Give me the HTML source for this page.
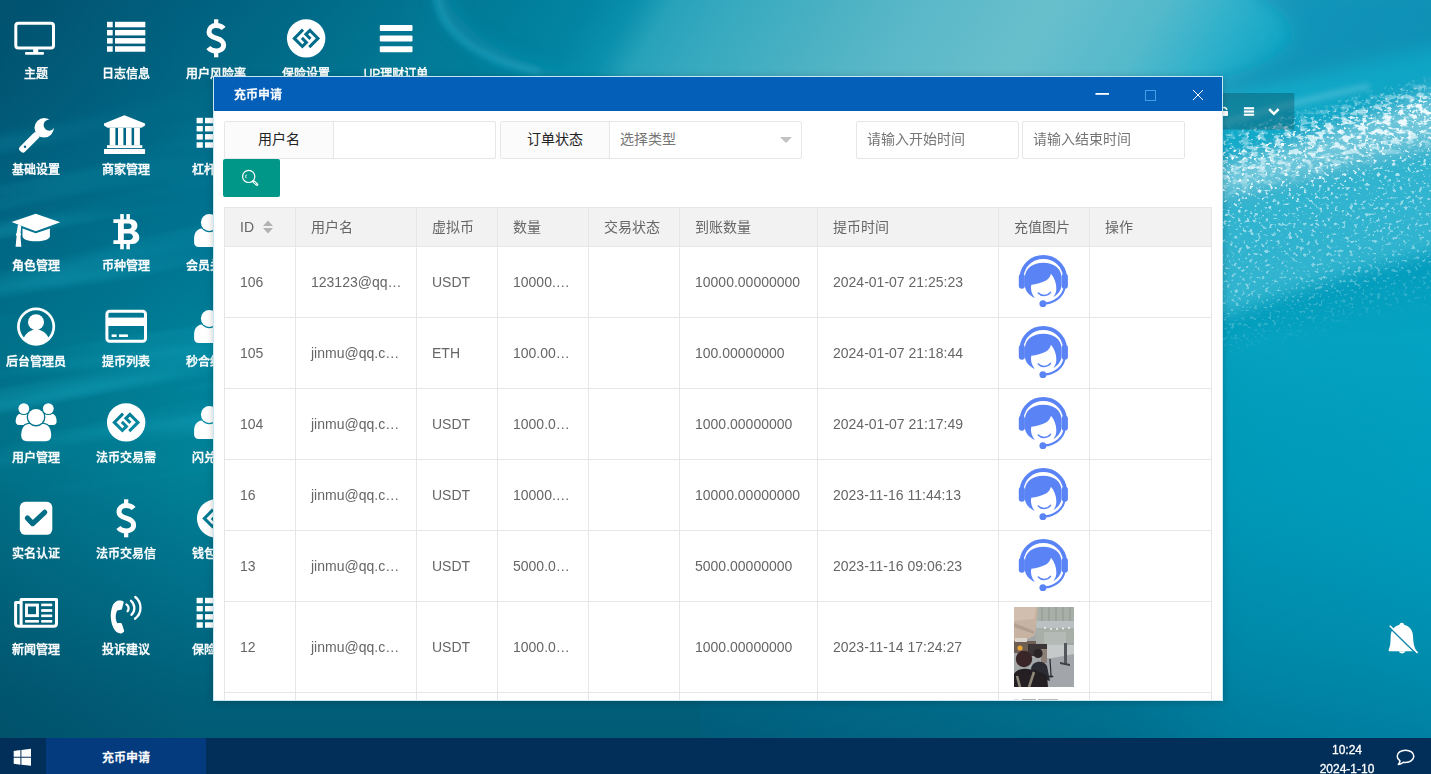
<!DOCTYPE html><html lang="zh-CN"><head><meta charset="utf-8"><title>充币申请</title><style>
*{box-sizing:border-box;margin:0;padding:0}
html,body{width:1431px;height:774px;overflow:hidden}
body{position:relative;font-family:"Liberation Sans","Noto Sans CJK SC",sans-serif;font-size:14px;color:#666;background:#067a98}
#bg{position:absolute;left:0;top:0;width:1431px;height:774px}
#desk{position:absolute;left:0;top:0;width:1431px;height:738px;overflow:hidden}
.lbl{position:absolute;width:90px;text-align:center;color:#fff;font-size:12px;line-height:16px;font-weight:500;-webkit-text-stroke:0.35px #fff;white-space:nowrap;font-family:"Liberation Sans","Noto Sans CJK SC",sans-serif}
#icons{position:absolute;left:0;top:0}
#win{position:absolute;left:213px;top:76px;width:1010px;height:625px;background:#fff;border:1px solid #c4e9f3;overflow:hidden;box-shadow:0 1px 7px rgba(0,0,0,.22)}
#ttl{position:absolute;left:0;top:0;width:1008px;height:34px;background:#045fb8;color:#fff}
#ttl .t{position:absolute;left:20px;top:9.5px;font-size:12px;line-height:17px;font-weight:500;-webkit-text-stroke:0.35px #fff}
#body{position:absolute;left:0;top:34px;width:1008px;height:589px;background:#fff;overflow:hidden}
.fi{position:absolute;top:10px;height:38px;border:1px solid #e6e6e6;border-radius:2px;background:#fff}
.fl{position:absolute;top:0;left:0;height:36px;line-height:35px;text-align:center;background:#fbfbfb;border-right:1px solid #e6e6e6;color:#222;font-size:14px}
.ph{position:absolute;top:0;line-height:35px;color:#757575;font-size:14px}
#sbtn{position:absolute;left:9px;top:48px;width:57px;height:38px;background:#009688;border-radius:2px}
table{position:absolute;left:10px;top:96px;width:987px;border-collapse:collapse;table-layout:fixed}
td,th{border:1px solid #e6e6e6;padding:0 15px;text-align:left;font-weight:400;font-size:14px;color:#666;white-space:nowrap;overflow:hidden}
th{background:#f2f2f2;height:39px;padding-bottom:2px}
td{height:71px}
#task{position:absolute;left:0;top:738px;width:1431px;height:36px;background:#022f5a}
#task .it{position:absolute;left:46px;top:0;width:160px;height:36px;background:#043b7e;color:#fff;font-size:12px;line-height:36px;text-align:center;font-weight:500;padding-top:2px;-webkit-text-stroke:0.35px #fff}
#clk{position:absolute;left:1297px;top:3px;width:100px;text-align:center;color:#fff;font-size:12px;line-height:18.5px;-webkit-text-stroke:0.3px #fff}
</style></head><body>
<svg id="bg" width="1431" height="774" viewBox="0 0 1431 774">
<defs>
<linearGradient id="g0" x1="0" y1="0" x2="0" y2="774" gradientUnits="userSpaceOnUse">
<stop offset="0" stop-color="#015c7a"/><stop offset="0.13" stop-color="#016280"/><stop offset="0.3" stop-color="#017492"/><stop offset="0.45" stop-color="#01819a"/><stop offset="0.6" stop-color="#018298"/><stop offset="0.75" stop-color="#01718a"/><stop offset="0.9" stop-color="#015f79"/><stop offset="1" stop-color="#015872"/>
</linearGradient>
<linearGradient id="gLd" x1="0" y1="0" x2="190" y2="0" gradientUnits="userSpaceOnUse"><stop offset="0" stop-color="#002038" stop-opacity="0.17"/><stop offset="1" stop-color="#002038" stop-opacity="0"/></linearGradient>
<linearGradient id="gBl" x1="150" y1="0" x2="760" y2="0" gradientUnits="userSpaceOnUse"><stop offset="0" stop-color="#007a98" stop-opacity="0"/><stop offset="0.5" stop-color="#007a98" stop-opacity="0.35"/><stop offset="1" stop-color="#007a98" stop-opacity="0"/></linearGradient>
<linearGradient id="gR" x1="700" y1="0" x2="1431" y2="0" gradientUnits="userSpaceOnUse">
<stop offset="0" stop-color="#009abb" stop-opacity="0"/><stop offset="0.55" stop-color="#009abb" stop-opacity="0.45"/><stop offset="0.75" stop-color="#009cbd" stop-opacity="0.85"/><stop offset="1" stop-color="#009ebf" stop-opacity="0.97"/>
</linearGradient>
<linearGradient id="gRv" x1="0" y1="250" x2="0" y2="774" gradientUnits="userSpaceOnUse">
<stop offset="0" stop-color="#12b0cc" stop-opacity="0"/><stop offset="0.17" stop-color="#0aaac8" stop-opacity="0.5"/><stop offset="0.45" stop-color="#009cbc" stop-opacity="0.2"/><stop offset="0.75" stop-color="#006e90" stop-opacity="0.3"/><stop offset="1" stop-color="#00587a" stop-opacity="0.5"/>
</linearGradient>
<linearGradient id="gT" x1="0" y1="0" x2="1431" y2="0" gradientUnits="userSpaceOnUse" gradientTransform="translate(22 0) skewX(-31)">
<stop offset="0" stop-color="#0a6280" stop-opacity="0"/><stop offset="0.14" stop-color="#006f8c" stop-opacity="0.35"/><stop offset="0.30" stop-color="#027a97"/><stop offset="0.335" stop-color="#017c99"/><stop offset="0.40" stop-color="#0285a2"/>
<stop offset="0.43" stop-color="#0a90ac"/><stop offset="0.455" stop-color="#27a2ba"/><stop offset="0.50" stop-color="#38aabf"/><stop offset="0.56" stop-color="#48b0c3"/><stop offset="0.62" stop-color="#58b7c7"/><stop offset="0.72" stop-color="#68bfcc"/><stop offset="0.80" stop-color="#54b9cb"/>
<stop offset="0.85" stop-color="#30b1cb"/><stop offset="0.90" stop-color="#10a6c5"/><stop offset="1" stop-color="#089cbd"/>
</linearGradient>
<linearGradient id="gTm" x1="0" y1="0" x2="0" y2="330" gradientUnits="userSpaceOnUse">
<stop offset="0" stop-color="#fff"/><stop offset="0.45" stop-color="#fff"/><stop offset="1" stop-color="#000"/>
</linearGradient>
<mask id="mT" maskUnits="userSpaceOnUse" x="0" y="0" width="1431" height="774"><rect width="1431" height="330" fill="url(#gTm)"/></mask>
<filter id="blur8" x="-20%" y="-20%" width="140%" height="140%"><feGaussianBlur stdDeviation="8"/></filter>
<filter id="blur3" x="-20%" y="-20%" width="140%" height="140%"><feGaussianBlur stdDeviation="3"/></filter>
<filter id="foam" x="0" y="0" width="100%" height="100%" color-interpolation-filters="sRGB">
<feTurbulence type="fractalNoise" baseFrequency="0.26 0.3" numOctaves="2" seed="7" result="n"/>
<feColorMatrix in="n" type="matrix" values="0 0 0 0 0.93  0 0 0 0 0.98  0 0 0 0 1  8 0 0 0 -4.7"/>
</filter>
<filter id="foam2" x="0" y="0" width="100%" height="100%" color-interpolation-filters="sRGB">
<feTurbulence type="fractalNoise" baseFrequency="0.12 0.2" numOctaves="3" seed="23" result="n"/>
<feColorMatrix in="n" type="matrix" values="0 0 0 0 0.95  0 0 0 0 0.99  0 0 0 0 1  6 0 0 0 -2.9"/>
</filter>
<filter id="rip" x="0" y="0" width="100%" height="100%" color-interpolation-filters="sRGB">
<feTurbulence type="fractalNoise" baseFrequency="0.003 0.035" numOctaves="2" seed="11" result="n"/>
<feColorMatrix in="n" type="matrix" values="0 0 0 0 0.1  0 0 0 0 0.68  0 0 0 0 0.78  2.6 0 0 0 -1.2"/>
</filter>
<linearGradient id="gFm" x1="0" y1="0" x2="0" y2="1">
<stop offset="0" stop-color="#000"/><stop offset="0.12" stop-color="#fff"/><stop offset="0.28" stop-color="#eee"/><stop offset="0.42" stop-color="#999"/><stop offset="0.75" stop-color="#666"/><stop offset="1" stop-color="#000"/>
</linearGradient>
<linearGradient id="gFm2" x1="0" y1="0" x2="0" y2="1">
<stop offset="0" stop-color="#000"/><stop offset="0.35" stop-color="#fff"/><stop offset="0.65" stop-color="#fff"/><stop offset="1" stop-color="#000"/>
</linearGradient>
<linearGradient id="gFx" x1="1200" y1="0" x2="1431" y2="0" gradientUnits="userSpaceOnUse"><stop offset="0" stop-color="#666"/><stop offset="0.5" stop-color="#ccc"/><stop offset="1" stop-color="#fff"/></linearGradient>
<mask id="mF" maskUnits="userSpaceOnUse" x="1100" y="-100" width="500" height="600"><g transform="rotate(-14 1326 140)"><rect x="1050" y="100" width="560" height="230" fill="url(#gFm)"/></g></mask>
<mask id="mF2" maskUnits="userSpaceOnUse" x="1100" y="-100" width="500" height="600"><g transform="rotate(-14 1326 140)"><rect x="1050" y="104" width="560" height="72" fill="url(#gFm2)"/></g></mask>
<mask id="mFx" maskUnits="userSpaceOnUse" x="1100" y="-100" width="500" height="600"><rect x="1100" y="-100" width="500" height="600" fill="url(#gFx)"/></mask>
<mask id="mRip" maskUnits="userSpaceOnUse" x="0" y="0" width="700" height="774"><linearGradient id="gRm" x1="0" y1="0" x2="0" y2="774" gradientUnits="userSpaceOnUse"><stop offset="0.1" stop-color="#000"/><stop offset="0.3" stop-color="#fff"/><stop offset="0.52" stop-color="#fff"/><stop offset="0.68" stop-color="#000"/></linearGradient><rect width="700" height="774" fill="url(#gRm)"/></mask>
</defs>
<rect width="1431" height="774" fill="url(#g0)"/><rect width="260" height="774" fill="url(#gLd)"/>
<g mask="url(#mRip)"><g transform="rotate(-9 100 350)"><rect x="-60" y="40" width="760" height="560" filter="url(#rip)" opacity="0.45"/></g></g>
<rect width="1431" height="774" fill="url(#gR)"/>
<rect x="700" y="250" width="731" height="524" fill="url(#gRv)"/>
<rect width="1431" height="330" fill="url(#gT)" mask="url(#mT)"/>
<path d="M437 -6 C440 30 472 58 540 72" fill="none" stroke="#2aa9c4" stroke-width="5" opacity="0.75" filter="url(#blur3)"/>
<g filter="url(#blur8)">
<path d="M440 -10 C446 30 500 70 600 86" fill="none" stroke="#1a9ab8" stroke-width="12" opacity="0.5"/>
<path d="M1240 -12 L1445 -12 L1445 42 C1380 52 1320 76 1222 96 L1215 80 C1290 60 1330 30 1240 -12 Z" fill="#1287b0" opacity="0.55"/>
<path d="M1215 168 C1290 146 1360 118 1445 86 L1445 142 C1360 162 1290 180 1215 200 Z" fill="#bfe8f0" opacity="0.55"/>
<path d="M1215 205 C1300 180 1370 160 1445 145 L1445 250 C1360 270 1290 290 1215 320 Z" fill="#4fc4dc" opacity="0.6"/>
<path d="M1215 100 C1290 90 1360 70 1445 50 L1445 100 C1360 125 1290 150 1215 170 Z" fill="#1fb4d4" opacity="0.35"/>
</g>
<path d="M1215 125 C1260 113 1300 100 1370 86" fill="none" stroke="#a8dfea" stroke-width="4" opacity="0.45" filter="url(#blur3)"/>
<g mask="url(#mF)"><rect x="1200" y="40" width="231" height="320" filter="url(#foam)"/></g>
<g mask="url(#mFx)"><g mask="url(#mF2)"><rect x="1200" y="40" width="231" height="200" filter="url(#foam2)"/></g></g>
</svg>
<div id="desk"><svg id="icons" width="1431" height="738" viewBox="0 0 1431 738" fill="#fff"><g transform="translate(0,0)"><rect x="15.8" y="23.3" width="37.7" height="24.8" rx="2.6" fill="none" stroke="#fff" stroke-width="3"/><rect x="33.2" y="49" width="5" height="4"/><rect x="25" y="52" width="19" height="2.7" rx="1"/></g><g transform="translate(90,0)"><rect x="17" y="21.80" width="5.7" height="5.5"/><rect x="25" y="21.80" width="30.3" height="5.5"/><rect x="17" y="29.95" width="5.7" height="5.5"/><rect x="25" y="29.95" width="30.3" height="5.5"/><rect x="17" y="38.10" width="5.7" height="5.5"/><rect x="25" y="38.10" width="30.3" height="5.5"/><rect x="17" y="46.25" width="5.7" height="5.5"/><rect x="25" y="46.25" width="30.3" height="5.5"/></g><g transform="translate(180,0)"><path d="M43.6 28.6 C42 26.5 39.5 25.5 36.15 25.5 C32 25.5 29 28 29 32 C29 35.5 32 37 36.15 38.2 C40.5 39.5 43.6 41 43.6 45 C43.6 48.8 40.5 50.9 36.15 50.9 C32.8 50.9 30 49.8 28.4 47.5" fill="none" stroke="#fff" stroke-width="5"/><rect x="34" y="19.3" width="4.3" height="5"/><rect x="34" y="52" width="4.3" height="5.3"/></g><g transform="translate(270,0)"><mask id="mk4"><rect x="10" y="10" width="60" height="60" fill="#fff"/><g fill="none" stroke="#000" stroke-width="3" stroke-linejoin="miter"><polyline points="33.03,29.68 24.31,38.4 32.37,46.46 36.4,42.43 31.87,37.89"/><polyline points="39.27,47.12 47.99,38.4 39.93,30.34 35.9,34.37 40.43,38.91"/></g></mask><circle cx="36.15" cy="38.4" r="19.2" mask="url(#mk4)"/></g><g transform="translate(360,0)"><rect x="19.8" y="24.9" width="32.7" height="6" rx="1"/><rect x="19.8" y="35.6" width="32.7" height="6" rx="1"/><rect x="19.8" y="46.2" width="32.7" height="6" rx="1"/></g><g transform="translate(0,96)"><mask id="mk6" maskUnits="userSpaceOnUse" x="0" y="0" width="90" height="90"><rect x="0" y="0" width="90" height="90" fill="#fff"/><circle cx="25" cy="50.7" r="1.25" fill="#000"/><circle cx="49.2" cy="29.1" r="5.6" fill="#000"/></mask><g mask="url(#mk6)"><rect transform="translate(20.5,55.2) rotate(-45)" x="0" y="-3.6" width="25" height="7.2" rx="2.8"/><circle cx="44.2" cy="31.8" r="9.7"/></g></g><g transform="translate(90,96)"><polygon points="34.4,19.3 55.1,27.4 55.1,29.6 51.5,31.8 17.5,31.8 14,29.6 14,27.4"/><rect x="14" y="53.1" width="41.1" height="4.8" rx="0.6"/><rect x="17" y="49.2" width="35.3" height="2.9"/><rect x="19.7" y="31.8" width="5.7" height="17.6"/><rect x="28" y="31.8" width="5.4" height="17.6"/><rect x="36" y="31.8" width="5.6" height="17.6"/><rect x="44.1" y="31.8" width="5.8" height="17.6"/></g><g transform="translate(180,96)"><rect x="16.6" y="21.80" width="6.2" height="5.5"/><rect x="25" y="21.80" width="30.3" height="5.5"/><rect x="16.6" y="29.95" width="6.2" height="5.5"/><rect x="25" y="29.95" width="30.3" height="5.5"/><rect x="16.6" y="38.10" width="6.2" height="5.5"/><rect x="25" y="38.10" width="30.3" height="5.5"/><rect x="16.6" y="46.25" width="6.2" height="5.5"/><rect x="25" y="46.25" width="30.3" height="5.5"/></g><g transform="translate(0,192)"><polygon points="35.7,21.75 60.3,30.15 35.7,39.2 11.5,29.9"/><path d="M22.5 36.4 L35.7 41.2 L49.9 36.4 L49.9 44.2 C49.9 47.2 43.5 49.3 35.9 49.3 C28.3 49.3 22.5 47.2 22.5 44.2 Z"/><path d="M18 32.6 L21.2 33.8 L20.6 41 C21.2 41.6 21.2 43.4 20.5 44 L21.3 54.7 L15.6 54.7 L16.6 44 C15.6 43.4 15.6 41.6 16.6 41 Z"/></g><g transform="translate(90,192)"><path fill-rule="evenodd" d="M23.4 27.2 L40 27.2 C44.5 27.2 47.4 29.8 47.4 33.6 C47.4 36.3 46 38.2 44 39.1 C47 39.9 49.3 42 49.3 45.2 C49.3 49.6 46 52.1 41 52.1 L23.4 52.1 L23.4 48.2 L28 48.2 L28 31.1 L23.4 31.1 Z M33.8 31.4 L38.5 31.4 C40.4 31.4 41.6 32.5 41.6 34.2 C41.6 35.9 40.4 36.9 38.5 36.9 L33.8 36.9 Z M33.8 41.4 L39.3 41.4 C41.5 41.4 42.9 42.7 42.9 44.7 C42.9 46.7 41.5 47.9 39.3 47.9 L33.8 47.9 Z"/><rect x="30.2" y="22.1" width="3.6" height="5.5"/><rect x="36.4" y="22.1" width="3.5" height="5.5"/><rect x="30.2" y="51.8" width="3.6" height="5.5"/><rect x="36.4" y="51.8" width="3.5" height="5.5"/></g><g transform="translate(180,192)"><circle cx="29.3" cy="30.5" r="8.4"/><path d="M14.1 47 C14.1 41 17 37 21.76 36.6 A9.7 9.7 0 0 0 36.84 36.6 C41.6 37 44.5 41 44.5 47 L44.5 50.5 C44.5 53.3 42.5 55 40 55 L18.6 55 C16.1 55 14.1 53.3 14.1 50.5 Z"/></g><g transform="translate(0,288)"><clipPath id="ck12"><circle cx="36.1" cy="38.6" r="18"/></clipPath><circle cx="36.1" cy="38.6" r="17.7" fill="none" stroke="#fff" stroke-width="2.7"/><circle cx="36" cy="34.2" r="8"/><ellipse cx="36.2" cy="57" rx="14" ry="15.6" clip-path="url(#ck12)"/></g><g transform="translate(90,288)"><rect x="16.9" y="23.2" width="38.6" height="30.1" rx="2.8" fill="none" stroke="#fff" stroke-width="3"/><rect x="17" y="29.6" width="38.5" height="8.4"/><rect x="21.6" y="46.4" width="5" height="2.6"/><rect x="29" y="46.4" width="8.9" height="2.6"/></g><g transform="translate(180,288)"><circle cx="29.3" cy="30.5" r="8.4"/><path d="M14.1 47 C14.1 41 17 37 21.76 36.6 A9.7 9.7 0 0 0 36.84 36.6 C41.6 37 44.5 41 44.5 47 L44.5 50.5 C44.5 53.3 42.5 55 40 55 L18.6 55 C16.1 55 14.1 53.3 14.1 50.5 Z"/></g><g transform="translate(0,384)"><mask id="mk15" maskUnits="userSpaceOnUse" x="0" y="0" width="90" height="90"><rect x="0" y="0" width="90" height="90" fill="#fff"/><circle cx="36.05" cy="33" r="9.4" fill="#000"/><circle cx="23.8" cy="24.6" r="6.5" fill="#000"/><circle cx="48.3" cy="24.6" r="6.5" fill="#000"/><path d="M21.2 51.5 C21.2 45 23.7 40.4 28.4 39.9 L43.9 39.9 C48.6 40.4 51.2 45 51.2 51.5 C51.2 55.3 48.8 57.2 45.6 57.2 L26.8 57.2 C23.6 57.2 21.2 55.3 21.2 51.5 Z" fill="#000" stroke="#000" stroke-width="2.4"/></mask><mask id="nk15" maskUnits="userSpaceOnUse" x="0" y="0" width="90" height="90"><rect x="0" y="0" width="90" height="90" fill="#fff"/><circle cx="36.05" cy="33" r="9.4" fill="#000"/></mask><g mask="url(#mk15)"><path d="M15.7 37.6 C15.7 33 17.4 30.2 20.4 29.8 L27.5 29.8 L31 41.1 L19 41.1 C17 41.1 15.7 39.8 15.7 37.6 Z"/><path d="M56.6 37.6 C56.6 33 54.9 30.2 51.9 29.8 L44.8 29.8 L41.3 41.1 L53.3 41.1 C55.3 41.1 56.6 39.8 56.6 37.6 Z"/></g><path d="M21.2 51.5 C21.2 45 23.7 40.4 28.4 39.9 L43.9 39.9 C48.6 40.4 51.2 45 51.2 51.5 C51.2 55.3 48.8 57.2 45.6 57.2 L26.8 57.2 C23.6 57.2 21.2 55.3 21.2 51.5 Z" mask="url(#nk15)"/><circle cx="23.8" cy="24.6" r="5.4"/><circle cx="48.3" cy="24.6" r="5.4"/><circle cx="36.05" cy="33" r="8.1"/></g><g transform="translate(90,384)"><mask id="mk16"><rect x="10" y="10" width="60" height="60" fill="#fff"/><g fill="none" stroke="#000" stroke-width="3" stroke-linejoin="miter"><polyline points="33.03,29.68 24.31,38.4 32.37,46.46 36.4,42.43 31.87,37.89"/><polyline points="39.27,47.12 47.99,38.4 39.93,30.34 35.9,34.37 40.43,38.91"/></g></mask><circle cx="36.15" cy="38.4" r="19.2" mask="url(#mk16)"/></g><g transform="translate(180,384)"><circle cx="29.3" cy="30.5" r="8.4"/><path d="M14.1 47 C14.1 41 17 37 21.76 36.6 A9.7 9.7 0 0 0 36.84 36.6 C41.6 37 44.5 41 44.5 47 L44.5 50.5 C44.5 53.3 42.5 55 40 55 L18.6 55 C16.1 55 14.1 53.3 14.1 50.5 Z"/></g><g transform="translate(0,480)"><mask id="mk18"><rect x="0" y="0" width="80" height="80" fill="#fff"/><polyline points="27.4,38.1 32.7,43.6 44.7,32.3" fill="none" stroke="#000" stroke-width="5.2" stroke-linecap="round" stroke-linejoin="round"/></mask><rect x="19.8" y="21.8" width="32.5" height="33" rx="5.5" mask="url(#mk18)"/></g><g transform="translate(90,480)"><path d="M43.6 28.6 C42 26.5 39.5 25.5 36.15 25.5 C32 25.5 29 28 29 32 C29 35.5 32 37 36.15 38.2 C40.5 39.5 43.6 41 43.6 45 C43.6 48.8 40.5 50.9 36.15 50.9 C32.8 50.9 30 49.8 28.4 47.5" fill="none" stroke="#fff" stroke-width="5"/><rect x="34" y="19.3" width="4.3" height="5"/><rect x="34" y="52" width="4.3" height="5.3"/></g><g transform="translate(180,480)"><mask id="mk20"><rect x="10" y="10" width="60" height="60" fill="#fff"/><g fill="none" stroke="#000" stroke-width="3" stroke-linejoin="miter"><polyline points="33.03,29.68 24.31,38.4 32.37,46.46 36.4,42.43 31.87,37.89"/><polyline points="39.27,47.12 47.99,38.4 39.93,30.34 35.9,34.37 40.43,38.91"/></g></mask><circle cx="36.15" cy="38.4" r="19.2" mask="url(#mk20)"/></g><g transform="translate(0,576)"><path d="M21.1 23.6 L56.5 23.6 L56.5 47.6 C56.5 49.4 55.4 50.3 53.8 50.3 L18.6 50.3 C16.8 50.3 15.6 49.2 15.6 47.4 L15.6 26.5 L21.1 26.5 Z" fill="none" stroke="#fff" stroke-width="3" stroke-linejoin="round"/><line x1="21.1" y1="26.5" x2="21.1" y2="49" stroke="#fff" stroke-width="3"/><rect x="26.5" y="29.05" width="10.95" height="10.6" fill="none" stroke="#fff" stroke-width="2.9"/><rect x="41.2" y="27.6" width="11" height="2.6"/><rect x="41.2" y="33.1" width="11" height="2.8"/><rect x="41.2" y="38.5" width="11" height="2.6"/><rect x="25.06" y="44" width="13.85" height="2.6"/><rect x="41.2" y="44" width="11" height="2.6"/></g><g transform="translate(90,576)"><path d="M33.8 25.9 C32.5 24.6 29.5 24.2 27.3 24.8 C24.5 26 22.8 28.5 22 31.5 C21 35 20.6 38 20.8 41 C21 45 21.8 48 22.8 50.5 C24 53.5 25.5 55.5 27.3 56.6 C29 57.5 30.8 57.5 31.8 57.2 C33 56.8 34 56 34.2 55 L31.8 47.4 C30.5 46.9 28.5 46.9 27.3 47.2 C26.2 45.5 25.7 43.5 25.7 41.1 C25.7 38.5 26.3 36.3 27.3 34.6 C28.5 34.3 30.5 34 31.8 33.6 Z"/><g fill="none" stroke="#fff" stroke-width="2.3" stroke-linecap="round"><path d="M36.5 28.4 C38.8 29.7 39.3 33.4 37.6 35.2"/><path d="M41 24.8 C45.2 28.2 45.6 35.4 41.4 38.8"/><path d="M45.3 21 C52 26.2 52.5 37.4 45 42.7"/></g></g><g transform="translate(180,576)"><rect x="16.6" y="21.80" width="6.2" height="5.5"/><rect x="25" y="21.80" width="30.3" height="5.5"/><rect x="16.6" y="29.95" width="6.2" height="5.5"/><rect x="25" y="29.95" width="30.3" height="5.5"/><rect x="16.6" y="38.10" width="6.2" height="5.5"/><rect x="25" y="38.10" width="30.3" height="5.5"/><rect x="16.6" y="46.25" width="6.2" height="5.5"/><rect x="25" y="46.25" width="30.3" height="5.5"/></g><rect x="1222" y="93" width="72.3" height="36.6" fill="#04303c" fill-opacity="0.3"/><rect x="1218" y="111.1" width="10" height="4.8" rx="0.8"/><path d="M1223.2 107.6 A3.2 3.2 0 0 1 1226.9 110" fill="none" stroke="#fff" stroke-width="1.4"/><g><rect x="1243.9" y="107.2" width="10.2" height="2.1"/><rect x="1243.9" y="110.4" width="10.2" height="2.2"/><rect x="1243.9" y="113.7" width="10.2" height="2.1"/><polyline points="1269.2,109.2 1273.9,113.9 1278.6,109.2" fill="none" stroke="#fff" stroke-width="2.4"/></g><g transform="translate(1388,622)"><path d="M13.8 0.7 C15 0.7 16 1.6 16.2 2.8 C21.5 4.2 24.8 8.5 25 14 C25.2 20 26 24.5 27.6 27.6 L27.6 29.3 L0.75 29.3 L0.75 27.6 C2.2 24.5 2.6 20 2.7 14 C2.9 8.5 6.1 4.2 11.4 2.8 C11.6 1.6 12.6 0.7 13.8 0.7 Z"/><path d="M10.8 29.3 L17.5 29.3 C17 30.7 15.6 31.4 14.1 31.4 C12.6 31.4 11.3 30.7 10.8 29.3 Z"/><line x1="0.7" y1="4.8" x2="28.5" y2="32" stroke="#0a86a8" stroke-width="1.6"/><line x1="1.76" y1="3.76" x2="29.6" y2="30.9" stroke="#fff" stroke-width="1.6"/></g></svg><div class="lbl" style="left:-9px;top:66px">主题</div><div class="lbl" style="left:81px;top:66px">日志信息</div><div class="lbl" style="left:171px;top:66px">用户风险率</div><div class="lbl" style="left:261px;top:66px">保险设置</div><div class="lbl" style="left:351px;top:66px">UP理财订单</div><div class="lbl" style="left:-9px;top:162px">基础设置</div><div class="lbl" style="left:81px;top:162px">商家管理</div><div class="lbl" style="left:171px;top:162px">杠杆交易</div><div class="lbl" style="left:-9px;top:258px">角色管理</div><div class="lbl" style="left:81px;top:258px">币种管理</div><div class="lbl" style="left:171px;top:258px">会员关系图</div><div class="lbl" style="left:-9px;top:354px">后台管理员</div><div class="lbl" style="left:81px;top:354px">提币列表</div><div class="lbl" style="left:171px;top:354px">秒合约订单</div><div class="lbl" style="left:-9px;top:450px">用户管理</div><div class="lbl" style="left:81px;top:450px">法币交易需</div><div class="lbl" style="left:171px;top:450px">闪兑订单</div><div class="lbl" style="left:-9px;top:546px">实名认证</div><div class="lbl" style="left:81px;top:546px">法币交易信</div><div class="lbl" style="left:171px;top:546px">钱包管理</div><div class="lbl" style="left:-9px;top:642px">新闻管理</div><div class="lbl" style="left:81px;top:642px">投诉建议</div><div class="lbl" style="left:171px;top:642px">保险订单</div></div><div id="win"><div id="ttl"><span class="t">充币申请</span><svg width="140" height="34" viewBox="0 0 140 34" style="position:absolute;left:868px;top:0"><rect x="13.5" y="16" width="13.5" height="1.8" fill="#fff"/><rect x="63.5" y="13.5" width="10" height="10" fill="none" stroke="#3fa0e8" stroke-width="1"/><path d="M111 13 L121 23 M121 13 L111 23" stroke="#fff" stroke-width="1" fill="none"/></svg></div><div id="body"><div class="fi" style="left:10px;width:272px"><div class="fl" style="width:109px">用户名</div></div><div class="fi" style="left:286px;width:302px"><div class="fl" style="width:109px">订单状态</div><span class="ph" style="left:119px">选择类型</span><svg width="12" height="6" viewBox="0 0 12 6" style="position:absolute;left:279px;top:15px"><polygon points="0,0 12,0 6,6" fill="#c2c2c2"/></svg></div><div class="fi" style="left:642px;width:163px"><span class="ph" style="left:10px">请输入开始时间</span></div><div class="fi" style="left:808px;width:163px"><span class="ph" style="left:10px">请输入结束时间</span></div><div id="sbtn"><svg width="57" height="38" viewBox="0 0 57 38" fill="none" stroke="#fff"><circle cx="25.7" cy="17.4" r="6.1" stroke-width="1.2"/><path d="M23.2 19.2 A3.6 3.6 0 0 1 23.2 15.6" stroke-width="1" /><line x1="30.6" y1="22.5" x2="33.9" y2="25.6" stroke-width="2.8" stroke-linecap="round"/><line x1="30.9" y1="22.8" x2="33.6" y2="25.3" stroke="#009688" stroke-width="0.9"/></svg></div><table><colgroup><col style="width:71px"><col style="width:121px"><col style="width:81px"><col style="width:91px"><col style="width:91px"><col style="width:138px"><col style="width:181px"><col style="width:91px"><col style="width:122px"></colgroup><tr><th>ID<svg width="12" height="14" viewBox="0 0 12 14" style="position:relative;top:2px;margin-left:8px"><polygon points="6,0.5 11,6 1,6" fill="#b2b2b2"/><polygon points="6,13.5 11,8 1,8" fill="#b2b2b2"/></svg></th><th>用户名</th><th>虚拟币</th><th>数量</th><th>交易状态</th><th>到账数量</th><th>提币时间</th><th>充值图片</th><th>操作</th></tr><tr style="height:71px"><td style="height:71px">106</td><td style="height:71px">123123@qq…</td><td style="height:71px">USDT</td><td style="height:71px">10000.…</td><td style="height:71px"></td><td style="height:71px">10000.00000000</td><td style="height:71px">2024-01-07 21:25:23</td><td style="height:71px;padding:0;position:relative"><svg width="52" height="52" viewBox="0 0 52 52" style="position:absolute;left:18px;top:8px"><path d="M4.7 21 C5.8 10.5 14.5 2.1 26.3 2.1 C38.1 2.1 46.8 10.5 47.9 21" fill="none" stroke="#5a84f5" stroke-width="4"/><rect x="1.8" y="18.7" width="6.1" height="15.1" rx="3" fill="#5a84f5"/><rect x="44.6" y="18.7" width="6.3" height="15.1" rx="3" fill="#5a84f5"/><path d="M17.8 43.1 C12 40 7.9 36 7.9 30 L7.9 22 C8.5 13 16 7.7 26.3 7.7 C36.6 7.7 44 13 44.5 22 L44.5 30 C44.5 35 41 39.5 36.4 42 C38.5 39 39.5 36.5 39.3 33 C39.3 28 37.5 23 34 18.7 C33 22 31.5 24 29 25.5 C25 27.8 19 29.3 14.3 29.8 C13.3 34 14.5 39 17.8 43.1 Z" fill="#5a84f5"/><path d="M21.3 38 C24 41.3 30.5 41.3 33.5 37.4" fill="none" stroke="#5a84f5" stroke-width="1.5" stroke-linecap="round"/><path d="M47.4 33 C46 41 38 47.5 28.8 48.4" fill="none" stroke="#5a84f5" stroke-width="2.1"/><circle cx="25.9" cy="48.7" r="3.5" fill="#5a84f5"/></svg></td><td style="height:71px"></td></tr><tr style="height:71px"><td style="height:71px">105</td><td style="height:71px">jinmu@qq.c…</td><td style="height:71px">ETH</td><td style="height:71px">100.00…</td><td style="height:71px"></td><td style="height:71px">100.00000000</td><td style="height:71px">2024-01-07 21:18:44</td><td style="height:71px;padding:0;position:relative"><svg width="52" height="52" viewBox="0 0 52 52" style="position:absolute;left:18px;top:8px"><path d="M4.7 21 C5.8 10.5 14.5 2.1 26.3 2.1 C38.1 2.1 46.8 10.5 47.9 21" fill="none" stroke="#5a84f5" stroke-width="4"/><rect x="1.8" y="18.7" width="6.1" height="15.1" rx="3" fill="#5a84f5"/><rect x="44.6" y="18.7" width="6.3" height="15.1" rx="3" fill="#5a84f5"/><path d="M17.8 43.1 C12 40 7.9 36 7.9 30 L7.9 22 C8.5 13 16 7.7 26.3 7.7 C36.6 7.7 44 13 44.5 22 L44.5 30 C44.5 35 41 39.5 36.4 42 C38.5 39 39.5 36.5 39.3 33 C39.3 28 37.5 23 34 18.7 C33 22 31.5 24 29 25.5 C25 27.8 19 29.3 14.3 29.8 C13.3 34 14.5 39 17.8 43.1 Z" fill="#5a84f5"/><path d="M21.3 38 C24 41.3 30.5 41.3 33.5 37.4" fill="none" stroke="#5a84f5" stroke-width="1.5" stroke-linecap="round"/><path d="M47.4 33 C46 41 38 47.5 28.8 48.4" fill="none" stroke="#5a84f5" stroke-width="2.1"/><circle cx="25.9" cy="48.7" r="3.5" fill="#5a84f5"/></svg></td><td style="height:71px"></td></tr><tr style="height:71px"><td style="height:71px">104</td><td style="height:71px">jinmu@qq.c…</td><td style="height:71px">USDT</td><td style="height:71px">1000.0…</td><td style="height:71px"></td><td style="height:71px">1000.00000000</td><td style="height:71px">2024-01-07 21:17:49</td><td style="height:71px;padding:0;position:relative"><svg width="52" height="52" viewBox="0 0 52 52" style="position:absolute;left:18px;top:8px"><path d="M4.7 21 C5.8 10.5 14.5 2.1 26.3 2.1 C38.1 2.1 46.8 10.5 47.9 21" fill="none" stroke="#5a84f5" stroke-width="4"/><rect x="1.8" y="18.7" width="6.1" height="15.1" rx="3" fill="#5a84f5"/><rect x="44.6" y="18.7" width="6.3" height="15.1" rx="3" fill="#5a84f5"/><path d="M17.8 43.1 C12 40 7.9 36 7.9 30 L7.9 22 C8.5 13 16 7.7 26.3 7.7 C36.6 7.7 44 13 44.5 22 L44.5 30 C44.5 35 41 39.5 36.4 42 C38.5 39 39.5 36.5 39.3 33 C39.3 28 37.5 23 34 18.7 C33 22 31.5 24 29 25.5 C25 27.8 19 29.3 14.3 29.8 C13.3 34 14.5 39 17.8 43.1 Z" fill="#5a84f5"/><path d="M21.3 38 C24 41.3 30.5 41.3 33.5 37.4" fill="none" stroke="#5a84f5" stroke-width="1.5" stroke-linecap="round"/><path d="M47.4 33 C46 41 38 47.5 28.8 48.4" fill="none" stroke="#5a84f5" stroke-width="2.1"/><circle cx="25.9" cy="48.7" r="3.5" fill="#5a84f5"/></svg></td><td style="height:71px"></td></tr><tr style="height:71px"><td style="height:71px">16</td><td style="height:71px">jinmu@qq.c…</td><td style="height:71px">USDT</td><td style="height:71px">10000.…</td><td style="height:71px"></td><td style="height:71px">10000.00000000</td><td style="height:71px">2023-11-16 11:44:13</td><td style="height:71px;padding:0;position:relative"><svg width="52" height="52" viewBox="0 0 52 52" style="position:absolute;left:18px;top:8px"><path d="M4.7 21 C5.8 10.5 14.5 2.1 26.3 2.1 C38.1 2.1 46.8 10.5 47.9 21" fill="none" stroke="#5a84f5" stroke-width="4"/><rect x="1.8" y="18.7" width="6.1" height="15.1" rx="3" fill="#5a84f5"/><rect x="44.6" y="18.7" width="6.3" height="15.1" rx="3" fill="#5a84f5"/><path d="M17.8 43.1 C12 40 7.9 36 7.9 30 L7.9 22 C8.5 13 16 7.7 26.3 7.7 C36.6 7.7 44 13 44.5 22 L44.5 30 C44.5 35 41 39.5 36.4 42 C38.5 39 39.5 36.5 39.3 33 C39.3 28 37.5 23 34 18.7 C33 22 31.5 24 29 25.5 C25 27.8 19 29.3 14.3 29.8 C13.3 34 14.5 39 17.8 43.1 Z" fill="#5a84f5"/><path d="M21.3 38 C24 41.3 30.5 41.3 33.5 37.4" fill="none" stroke="#5a84f5" stroke-width="1.5" stroke-linecap="round"/><path d="M47.4 33 C46 41 38 47.5 28.8 48.4" fill="none" stroke="#5a84f5" stroke-width="2.1"/><circle cx="25.9" cy="48.7" r="3.5" fill="#5a84f5"/></svg></td><td style="height:71px"></td></tr><tr style="height:71px"><td style="height:71px">13</td><td style="height:71px">jinmu@qq.c…</td><td style="height:71px">USDT</td><td style="height:71px">5000.0…</td><td style="height:71px"></td><td style="height:71px">5000.00000000</td><td style="height:71px">2023-11-16 09:06:23</td><td style="height:71px;padding:0;position:relative"><svg width="52" height="52" viewBox="0 0 52 52" style="position:absolute;left:18px;top:8px"><path d="M4.7 21 C5.8 10.5 14.5 2.1 26.3 2.1 C38.1 2.1 46.8 10.5 47.9 21" fill="none" stroke="#5a84f5" stroke-width="4"/><rect x="1.8" y="18.7" width="6.1" height="15.1" rx="3" fill="#5a84f5"/><rect x="44.6" y="18.7" width="6.3" height="15.1" rx="3" fill="#5a84f5"/><path d="M17.8 43.1 C12 40 7.9 36 7.9 30 L7.9 22 C8.5 13 16 7.7 26.3 7.7 C36.6 7.7 44 13 44.5 22 L44.5 30 C44.5 35 41 39.5 36.4 42 C38.5 39 39.5 36.5 39.3 33 C39.3 28 37.5 23 34 18.7 C33 22 31.5 24 29 25.5 C25 27.8 19 29.3 14.3 29.8 C13.3 34 14.5 39 17.8 43.1 Z" fill="#5a84f5"/><path d="M21.3 38 C24 41.3 30.5 41.3 33.5 37.4" fill="none" stroke="#5a84f5" stroke-width="1.5" stroke-linecap="round"/><path d="M47.4 33 C46 41 38 47.5 28.8 48.4" fill="none" stroke="#5a84f5" stroke-width="2.1"/><circle cx="25.9" cy="48.7" r="3.5" fill="#5a84f5"/></svg></td><td style="height:71px"></td></tr><tr style="height:91px"><td style="height:91px">12</td><td style="height:91px">jinmu@qq.c…</td><td style="height:91px">USDT</td><td style="height:91px">1000.0…</td><td style="height:91px"></td><td style="height:91px">1000.00000000</td><td style="height:91px">2023-11-14 17:24:27</td><td style="height:91px;padding:0;position:relative"><svg width="60" height="80" viewBox="0 0 60 80" style="position:absolute;left:15px;top:5px"><rect width="60" height="80" fill="#a3a7a8"/><rect x="22" y="0" width="38" height="36" fill="#a7afa8"/><rect x="22" y="14" width="38" height="7" fill="#b9c1c2"/><g fill="#eef3f3"><circle cx="31" cy="21" r="1"/><circle cx="37" cy="22" r="1"/><circle cx="43" cy="22" r="1"/><circle cx="49" cy="21.5" r="1"/><circle cx="55" cy="21" r="1"/></g><g stroke="#8d978f" stroke-width="1"><line x1="28" y1="0" x2="28" y2="14"/><line x1="35" y1="0" x2="35" y2="14"/><line x1="42" y1="0" x2="42" y2="14"/><line x1="49" y1="0" x2="49" y2="14"/><line x1="56" y1="0" x2="56" y2="14"/></g><rect x="30" y="25" width="22" height="14" fill="#b4bbb6"/><rect x="32" y="38" width="28" height="13" fill="#c6c9ca"/><polygon points="0,0 24,0 21,28 0,40" fill="#c8b3a2"/><polygon points="0,0 22,0 20,12 0,14" fill="#d1beae"/><polygon points="0,16 20,24 20,27 0,20" fill="#b39f90"/><rect x="0" y="34" width="22" height="12" fill="#6d5d53"/><circle cx="6" cy="41" r="2.6" fill="#e9a634"/><rect x="1" y="31" width="12" height="4" fill="#d9d3cc"/><polygon points="33,52 60,47 60,80 34,80" fill="#a2a6aa"/><rect x="50" y="36" width="3" height="22" fill="#53575b"/><polygon points="46,55 56,57 56,59 46,57" fill="#3d4044"/><rect x="14" y="37" width="19" height="12" fill="#3b3537"/><rect x="27" y="42" width="6" height="14" fill="#8a8078"/><path d="M17 62 C18 53 30 53 33 59 L36 74 L22 70 Z" fill="#2b2c33"/><circle cx="24" cy="46.5" r="4.6" fill="#2a2426"/><line x1="36" y1="52" x2="37" y2="69" stroke="#2a2a2c" stroke-width="1.2"/><ellipse cx="37" cy="69.5" rx="2.5" ry="1" fill="#2a2a2c"/><path d="M0 80 L0 67 C3 62 9 61 14 62 C22 63 28 65 33 69 L34 80 Z" fill="#231f22"/><circle cx="10" cy="52" r="8.2" fill="#3a2529"/><path d="M3 69 L6 80 M20 65 L15 80" stroke="#8d8778" stroke-width="2.6"/></svg></td><td style="height:91px"></td></tr><tr style="height:91px"><td style="height:91px">11</td><td style="height:91px">jinmu@qq.c…</td><td style="height:91px">USDT</td><td style="height:91px">1000.0…</td><td style="height:91px"></td><td style="height:91px">1000.00000000</td><td style="height:91px">2023-11-14 17:20:11</td><td style="height:91px;padding:0;position:relative"><svg width="60" height="80" viewBox="0 0 60 80" style="position:absolute;left:15px;top:5px"><rect width="60" height="80" fill="#fdfdfd"/><rect x="0" y="1.6" width="5" height="0.9" fill="#bbb"/><rect x="8" y="1.5" width="14" height="1.1" fill="#666"/><rect x="24" y="1.5" width="20" height="1.1" fill="#777"/></svg></td><td style="height:91px"></td></tr></table></div></div><div id="task"><svg width="46" height="36" viewBox="0 0 46 36" style="position:absolute;left:0;top:0" fill="#fff"><polygon points="13.7,13.1 20.4,12.1 20.4,18.8 13.7,18.8"/><polygon points="21.4,12 31,10.7 31,18.8 21.4,18.8"/><polygon points="13.7,19.8 20.4,19.8 20.4,26.7 13.7,25.7"/><polygon points="21.4,19.8 31,19.8 31,27.8 21.4,26.8"/></svg><div class="it">充币申请</div><div id="clk">10:24<br>2024-1-10</div><svg width="30" height="30" viewBox="0 0 30 30" style="position:absolute;left:1391px;top:4.4px" fill="none" stroke="#fff" stroke-width="1.5"><path d="M14.5 8.2 C19.2 8.2 22.8 10.9 22.8 14.3 C22.8 17.7 19.2 20.4 14.5 20.4 C13.7 20.4 12.9 20.3 12.2 20.2 C10.9 21.5 9.2 22.3 7.3 22.5 C8.3 21.4 8.9 20.2 9 18.9 C7.3 17.8 6.2 16.1 6.2 14.3 C6.2 10.9 9.8 8.2 14.5 8.2 Z" stroke-linejoin="round"/></svg></div></body></html>
